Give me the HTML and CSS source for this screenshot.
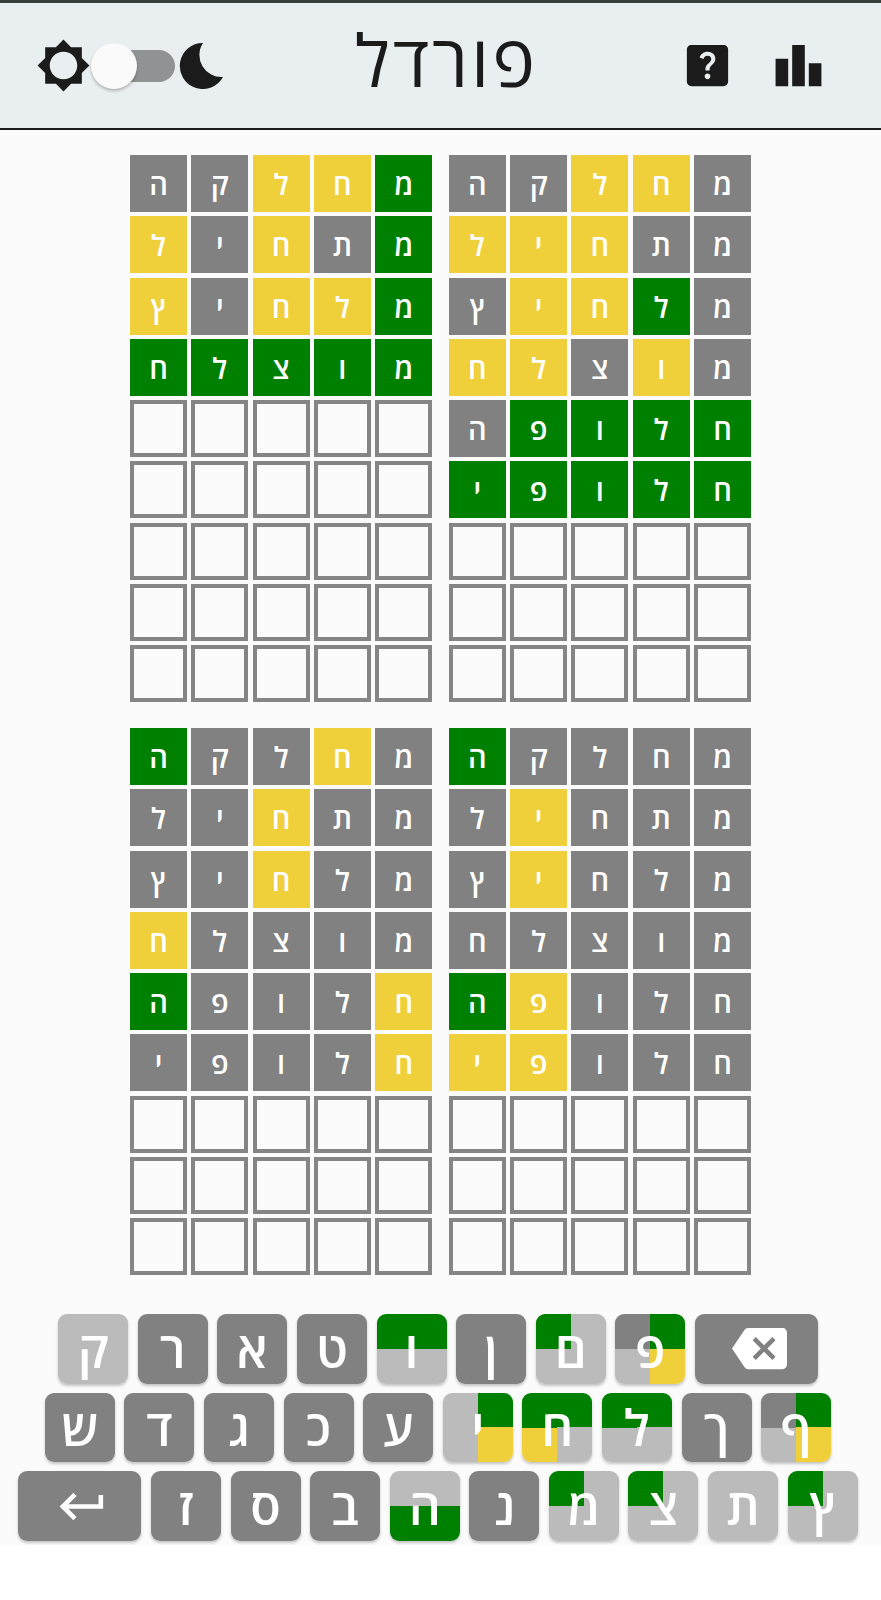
FILE: index.html
```html
<!DOCTYPE html>
<html lang="he">

<head>
    <meta charset="UTF-8">
    <meta name="viewport" content="width=device-width, initial-scale=1.0">
    <link rel="stylesheet" href="styles.css">
    <title>פורדל</title>
</head>

<body>
    <div class="app">
        <header class="header">
            <div class="theme-switch">
                <svg class="icon" viewBox="0 0 24 24"><path fill-rule="evenodd" d="M20 15.31L23.31 12 20 8.69V4h-4.69L12 .69 8.69 4H4v4.69L.69 12 4 15.31V20h4.69L12 23.31 15.31 20H20v-4.69zM12 18c-3.31 0-6-2.69-6-6s2.69-6 6-6 6 2.69 6 6-2.69 6-6 6z"/></svg>
                <div class="toggle">
                    <div class="toggle-track"></div>
                    <div class="toggle-knob"></div>
                </div>
                <svg class="moon" viewBox="0 0 44 46"><path d="M24 0A23 23 0 1 0 44 34A22 22 0 0 1 24 0Z"/></svg>
            </div>
            <h1 class="title">פורדל</h1>
            <div class="actions">
                <svg class="icon" viewBox="0 0 24 24"><path d="M19 3H5c-1.1 0-2 .9-2 2v14c0 1.1.9 2 2 2h14c1.1 0 2-.9 2-2V5c0-1.1-.9-2-2-2zm-6.99 15c-.7 0-1.26-.56-1.26-1.26 0-.71.56-1.25 1.26-1.25.71 0 1.25.54 1.25 1.25-.01.69-.54 1.26-1.25 1.26zm3.01-7.4c-.76 1.11-1.48 1.46-1.87 2.17-.16.29-.22.48-.22 1.41h-1.82c0-.49-.08-1.29.31-1.98.49-.87 1.42-1.4 1.96-2.17.57-.81.25-2.33-1.37-2.33-1.06 0-1.58.8-1.8 1.48l-1.65-.7C9.01 7.15 10.22 6 11.99 6c1.48 0 2.49.67 3.01 1.52.44.72.7 2.07.02 3.08z"/></svg>
                <svg class="icon" viewBox="0 0 24 24"><path d="M7.5 21H2V9h5.5v12zm7.25-18h-5.5v18h5.5V3zM22 11h-5.5v10H22V11z"/></svg>
            </div>
        </header>

        <main class="boards">
            <div class="board" dir="rtl">
                <div class="tile correct">מ</div><div class="tile present">ח</div><div class="tile present">ל</div><div class="tile absent">ק</div><div class="tile absent">ה</div>
                <div class="tile correct">מ</div><div class="tile absent">ת</div><div class="tile present">ח</div><div class="tile absent">י</div><div class="tile present">ל</div>
                <div class="tile correct">מ</div><div class="tile present">ל</div><div class="tile present">ח</div><div class="tile absent">י</div><div class="tile present">ץ</div>
                <div class="tile correct">מ</div><div class="tile correct">ו</div><div class="tile correct">צ</div><div class="tile correct">ל</div><div class="tile correct">ח</div>
                <div class="tile"></div><div class="tile"></div><div class="tile"></div><div class="tile"></div><div class="tile"></div>
                <div class="tile"></div><div class="tile"></div><div class="tile"></div><div class="tile"></div><div class="tile"></div>
                <div class="tile"></div><div class="tile"></div><div class="tile"></div><div class="tile"></div><div class="tile"></div>
                <div class="tile"></div><div class="tile"></div><div class="tile"></div><div class="tile"></div><div class="tile"></div>
                <div class="tile"></div><div class="tile"></div><div class="tile"></div><div class="tile"></div><div class="tile"></div>
            </div>
            <div class="board" dir="rtl">
                <div class="tile absent">מ</div><div class="tile present">ח</div><div class="tile present">ל</div><div class="tile absent">ק</div><div class="tile absent">ה</div>
                <div class="tile absent">מ</div><div class="tile absent">ת</div><div class="tile present">ח</div><div class="tile present">י</div><div class="tile present">ל</div>
                <div class="tile absent">מ</div><div class="tile correct">ל</div><div class="tile present">ח</div><div class="tile present">י</div><div class="tile absent">ץ</div>
                <div class="tile absent">מ</div><div class="tile present">ו</div><div class="tile absent">צ</div><div class="tile present">ל</div><div class="tile present">ח</div>
                <div class="tile correct">ח</div><div class="tile correct">ל</div><div class="tile correct">ו</div><div class="tile correct">פ</div><div class="tile absent">ה</div>
                <div class="tile correct">ח</div><div class="tile correct">ל</div><div class="tile correct">ו</div><div class="tile correct">פ</div><div class="tile correct">י</div>
                <div class="tile"></div><div class="tile"></div><div class="tile"></div><div class="tile"></div><div class="tile"></div>
                <div class="tile"></div><div class="tile"></div><div class="tile"></div><div class="tile"></div><div class="tile"></div>
                <div class="tile"></div><div class="tile"></div><div class="tile"></div><div class="tile"></div><div class="tile"></div>
            </div>
            <div class="board" dir="rtl">
                <div class="tile absent">מ</div><div class="tile present">ח</div><div class="tile absent">ל</div><div class="tile absent">ק</div><div class="tile correct">ה</div>
                <div class="tile absent">מ</div><div class="tile absent">ת</div><div class="tile present">ח</div><div class="tile absent">י</div><div class="tile absent">ל</div>
                <div class="tile absent">מ</div><div class="tile absent">ל</div><div class="tile present">ח</div><div class="tile absent">י</div><div class="tile absent">ץ</div>
                <div class="tile absent">מ</div><div class="tile absent">ו</div><div class="tile absent">צ</div><div class="tile absent">ל</div><div class="tile present">ח</div>
                <div class="tile present">ח</div><div class="tile absent">ל</div><div class="tile absent">ו</div><div class="tile absent">פ</div><div class="tile correct">ה</div>
                <div class="tile present">ח</div><div class="tile absent">ל</div><div class="tile absent">ו</div><div class="tile absent">פ</div><div class="tile absent">י</div>
                <div class="tile"></div><div class="tile"></div><div class="tile"></div><div class="tile"></div><div class="tile"></div>
                <div class="tile"></div><div class="tile"></div><div class="tile"></div><div class="tile"></div><div class="tile"></div>
                <div class="tile"></div><div class="tile"></div><div class="tile"></div><div class="tile"></div><div class="tile"></div>
            </div>
            <div class="board" dir="rtl">
                <div class="tile absent">מ</div><div class="tile absent">ח</div><div class="tile absent">ל</div><div class="tile absent">ק</div><div class="tile correct">ה</div>
                <div class="tile absent">מ</div><div class="tile absent">ת</div><div class="tile absent">ח</div><div class="tile present">י</div><div class="tile absent">ל</div>
                <div class="tile absent">מ</div><div class="tile absent">ל</div><div class="tile absent">ח</div><div class="tile present">י</div><div class="tile absent">ץ</div>
                <div class="tile absent">מ</div><div class="tile absent">ו</div><div class="tile absent">צ</div><div class="tile absent">ל</div><div class="tile absent">ח</div>
                <div class="tile absent">ח</div><div class="tile absent">ל</div><div class="tile absent">ו</div><div class="tile present">פ</div><div class="tile correct">ה</div>
                <div class="tile absent">ח</div><div class="tile absent">ל</div><div class="tile absent">ו</div><div class="tile present">פ</div><div class="tile present">י</div>
                <div class="tile"></div><div class="tile"></div><div class="tile"></div><div class="tile"></div><div class="tile"></div>
                <div class="tile"></div><div class="tile"></div><div class="tile"></div><div class="tile"></div><div class="tile"></div>
                <div class="tile"></div><div class="tile"></div><div class="tile"></div><div class="tile"></div><div class="tile"></div>
            </div>
        </main>

        <section class="keyboard">
            <div class="key-row">
                <button class="key tl-used tr-used bl-used br-used">ק</button>
                <button class="key">ר</button>
                <button class="key">א</button>
                <button class="key">ט</button>
                <button class="key tl-correct tr-correct bl-used br-used">ו</button>
                <button class="key">ן</button>
                <button class="key tl-correct tr-used bl-used br-used">ם</button>
                <button class="key tr-correct bl-used br-present">פ</button>
                <button class="key key-wide">
                    <svg class="key-icon" viewBox="0 0 24 24"><path fill-rule="evenodd" d="M22 3H7c-.69 0-1.23.35-1.59.88L0 12l5.41 8.11c.36.53.9.89 1.59.89h15c1.1 0 2-.9 2-2V5c0-1.1-.9-2-2-2zm-3 12.59L17.59 17 14 13.41 10.41 17 9 15.59 12.59 12 9 8.41 10.41 7 14 10.59 17.59 7 19 8.41 15.41 12 19 15.59z"/></svg>
                </button>
            </div>
            <div class="key-row">
                <button class="key">ש</button>
                <button class="key">ד</button>
                <button class="key">ג</button>
                <button class="key">כ</button>
                <button class="key">ע</button>
                <button class="key tl-used tr-correct bl-used br-present">י</button>
                <button class="key tl-correct tr-correct bl-present br-used">ח</button>
                <button class="key tl-correct tr-correct bl-used br-used">ל</button>
                <button class="key">ך</button>
                <button class="key tr-correct bl-used br-present">ף</button>
            </div>
            <div class="key-row">
                <button class="key key-wide">
                    <svg class="key-icon" viewBox="0 0 24 24"><path d="M19 7v4H5.83l3.58-3.59L8 6l-6 6 6 6 1.41-1.41L5.83 13H21V7z"/></svg>
                </button>
                <button class="key">ז</button>
                <button class="key">ס</button>
                <button class="key">ב</button>
                <button class="key tl-used tr-used bl-correct br-correct">ה</button>
                <button class="key">נ</button>
                <button class="key tl-correct tr-used bl-used br-used">מ</button>
                <button class="key tl-correct tr-used bl-used br-used">צ</button>
                <button class="key tl-used tr-used bl-used br-used">ת</button>
                <button class="key tl-correct tr-used bl-used br-used">ץ</button>
            </div>
        </section>
    </div>
</body>

</html>
```

FILE: styles.css
```css
* {
    box-sizing: border-box;
    margin: 0;
    padding: 0;
    font-family: "Open Sans", "Liberation Sans", sans-serif;
}

body {
    background-color: #fff;
}

.app {
    height: 1545px;
    background-color: #fbfbfb;
}

.header {
    display: flex;
    justify-content: space-between;
    align-items: center;
    height: 130px;
    padding: 0 55px 0 36px;
    background-color: #e9eef0;
    border-top: 3px solid #36403f;
    border-bottom: 2px solid #1b1b1b;
}

.icon {
    width: 55px;
    height: 55px;
    fill: #1b1b1b;
}

.theme-switch {
    display: flex;
    align-items: center;
}

.toggle {
    position: relative;
    display: flex;
    align-items: center;
    width: 84px;
    height: 46px;
    margin-right: 4px;
}

.toggle-track {
    width: 72px;
    height: 32px;
    margin-left: 12px;
    border-radius: 16px;
    background-color: #909394;
}

.toggle-knob {
    position: absolute;
    top: 0;
    left: 0;
    width: 46px;
    height: 46px;
    border-radius: 50%;
    background-color: #fafafa;
    box-shadow: 0 2px 3px rgba(0, 0, 0, 0.25);
}

.moon {
    width: 44px;
    height: 46px;
    fill: #1b1b1b;
}

.title {
    margin: 0 10px 14px 0;
    font-size: 72px;
    font-weight: 400;
    letter-spacing: 3px;
    line-height: 1;
    color: #1b1b1b;
}

.actions {
    display: flex;
    gap: 36px;
}

.boards {
    display: grid;
    grid-template-columns: repeat(2, max-content);
    justify-content: center;
    column-gap: 16.6px;
    row-gap: 25.6px;
    padding-top: 25px;
}

.board {
    display: grid;
    grid-template-columns: repeat(5, 57px);
    grid-auto-rows: 57px;
    gap: 4.3px;
}

.tile {
    display: flex;
    justify-content: center;
    align-items: center;
    font-size: 29px;
    font-weight: 600;
    color: #fff;
    border: 4px solid #858585;
}

.tile.absent {
    background-color: #818181;
    border: none;
}

.tile.present {
    background-color: #f0d03a;
    border: none;
}

.tile.correct {
    background-color: #008000;
    border: none;
}

.keyboard {
    display: flex;
    flex-direction: column;
    gap: 9.2px;
    margin-top: 38.7px;
    padding-right: 5px;
}

.key-row {
    display: flex;
    justify-content: center;
    gap: 9.6px;
}

.key {
    --tl: #818181;
    --tr: #818181;
    --br: #818181;
    --bl: #818181;
    display: flex;
    justify-content: center;
    align-items: center;
    width: 70px;
    height: 69.5px;
    border: none;
    border-radius: 9px;
    font-size: 50px;
    font-weight: 600;
    color: #fff;
    background: conic-gradient(var(--tr) 25%, var(--br) 0 50%, var(--bl) 0 75%, var(--tl) 0);
    box-shadow: 0 2px 3px rgba(0, 0, 0, 0.22);
}

.key-wide {
    width: 123px;
}

.key-icon {
    width: 55px;
    height: 55px;
    margin-left: 6px;
    fill: #fff;
}

.tl-used { --tl: #bbb; }
.tr-used { --tr: #bbb; }
.bl-used { --bl: #bbb; }
.br-used { --br: #bbb; }
.tl-correct { --tl: #008000; }
.tr-correct { --tr: #008000; }
.bl-correct { --bl: #008000; }
.br-correct { --br: #008000; }
.bl-present { --bl: #f0d03a; }
.br-present { --br: #f0d03a; }
```
